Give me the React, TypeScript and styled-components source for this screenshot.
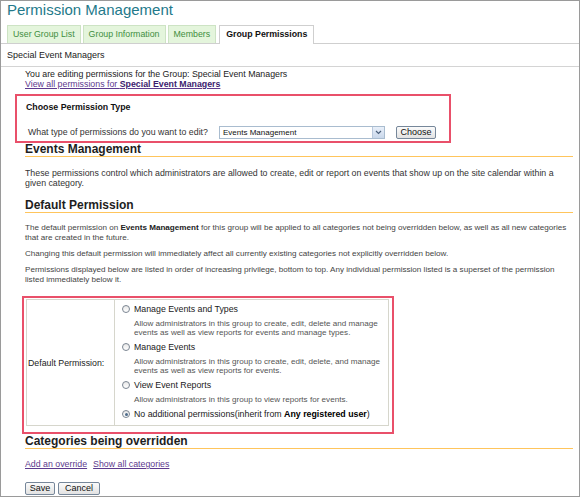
import React, { useState } from 'react'
import styled, { createGlobalStyle, css } from 'styled-components'

const GlobalStyle = createGlobalStyle`
  * { box-sizing: border-box; }
  body {
    margin: 0;
    font-family: "Liberation Sans", Arial, sans-serif;
    background: #ffffff;
    color: #222222;
  }
`;

const tabs = ['User Group List', 'Group Information', 'Members', 'Group Permissions']

const options = [
  {
    id: 'types',
    label: 'Manage Events and Types',
    desc: 'Allow administrators in this group to create, edit, delete and manage events as well as view reports for events and manage types.',
  },
  {
    id: 'events',
    label: 'Manage Events',
    desc: 'Allow administrators in this group to create, edit, delete, and manage events as well as view reports for events.',
  },
  {
    id: 'reports',
    label: 'View Event Reports',
    desc: 'Allow administrators in this group to view reports for events.',
  },
]

export default function App() {
  const [active, setActive] = useState<number>(3)
  const [perm, setPerm] = useState<string>('none')

  return (
    <>
      <GlobalStyle />
      <Frame>
        <Title>Permission Management</Title>
        <TabBar>
          {tabs.map((t, i) => (
            <Tab key={t} active={i === active} onClick={() => setActive(i)}>{t}</Tab>
          ))}
        </TabBar>
        <SubHeader>Special Event Managers</SubHeader>

        <Content>
          <Intro>
            You are editing permissions for the Group: Special Event Managers<br />
            <Link href="#">View all permissions for <strong>Special Event Managers</strong></Link>
          </Intro>

          <ChooseBox>
            <BoxTitle>Choose Permission Type</BoxTitle>
            <ChooseRow>
              <span>What type of permissions do you want to edit?</span>
              <Select>
                <span>Events Management</span>
                <SelectArrow>
                  <svg width="7" height="5" viewBox="0 0 7 5">
                    <path d="M1 1 L3.5 3.5 L6 1" fill="none" stroke="#4a5f7a" strokeWidth="1.2" />
                  </svg>
                </SelectArrow>
              </Select>
              <Button>Choose</Button>
            </ChooseRow>
          </ChooseBox>

          <Heading>Events Management</Heading>
          <Para>
            These permissions control which administrators are allowed to create, edit or report on events that show up on the site calendar within a given category.
          </Para>

          <Heading gap={11}>Default Permission</Heading>
          <SmallPara gap={10}>
            The default permission on <b>Events Management</b> for this group will be applied to all categories not being overridden below, as well as all new categories that are created in the future.
          </SmallPara>
          <SmallPara>
            Changing this default permission will immediately affect all currently existing categories not explicitly overridden below.
          </SmallPara>
          <SmallPara>
            Permissions displayed below are listed in order of increasing privilege, bottom to top. Any individual permission listed is a superset of the permission listed immediately below it.
          </SmallPara>

          <PermBox>
            <PermTable>
              <PermLabel>Default Permission:</PermLabel>
              <PermOptions>
                {options.map(o => (
                  <Option key={o.id}>
                    <OptionLabel onClick={() => setPerm(o.id)}>
                      <Radio checked={perm === o.id} />
                      {o.label}
                    </OptionLabel>
                    <OptionDesc>{o.desc}</OptionDesc>
                  </Option>
                ))}
                <Option>
                  <OptionLabel onClick={() => setPerm('none')}>
                    <Radio checked={perm === 'none'} />
                    <span>No additional permissions(inherit from <b>Any registered user</b>)</span>
                  </OptionLabel>
                </Option>
              </PermOptions>
            </PermTable>
          </PermBox>

          <Heading gap={1}>Categories being overridden</Heading>
          <Links>
            <Link href="#">Add an override</Link>
            <Link href="#">Show all categories</Link>
          </Links>
          <Actions>
            <Button width={30}>Save</Button>
            <Button width={42}>Cancel</Button>
          </Actions>
        </Content>
      </Frame>
    </>
  )
}

const Frame = styled.div`
  width: 580px;
  height: 497px;
  border: 1px solid #9a9a9a;
  overflow: hidden;
`;

const Title = styled.h1`
  margin: 0;
  padding-left: 6px;
  font-size: 15px;
  line-height: 18px;
  font-weight: normal;
  color: #23798a;
`;

const TabBar = styled.div`
  display: flex;
  align-items: flex-end;
  gap: 2px;
  height: 19px;
  margin-top: 6px;
  padding-left: 6px;
  border-bottom: 1px solid #cfcfcf;
`;

const Tab = styled.div<{ active: boolean }>`
  height: 18px;
  padding: 0 5px;
  font-size: 8.8px;
  line-height: 17px;
  color: #3f8e3f;
  background: #e4f5dc;
  border: 1px solid #cde3c4;
  border-bottom: none;
  cursor: pointer;
  ${p => p.active && css`
    height: 19px;
    margin-bottom: -1px;
    margin-left: 1px;
    padding: 0 6px;
    background: #ffffff;
    border-color: #cfcfcf;
    color: #111111;
    font-weight: bold;
  `}
`;

const SubHeader = styled.div`
  height: 23px;
  padding-left: 6px;
  font-size: 9px;
  line-height: 22px;
  color: #222;
  border-bottom: 1px solid #d4d4d4;
`;

const Content = styled.div`
  padding: 0 6px 0 24px;
`;

const Intro = styled.p`
  margin: 2px 0 0;
  font-size: 8.8px;
  line-height: 10px;
`;

const Link = styled.a`
  color: #5d3a8e;
  text-decoration: underline;
  strong { color: #3c1d6e; }
`;

const ChooseBox = styled.div`
  width: 436px;
  height: 49px;
  margin: 5px 0 0 -10px;
  padding: 6px 0 0 9px;
  border: 2px solid #e9506a;
`;

const BoxTitle = styled.div`
  font-size: 8.8px;
  line-height: 10px;
  font-weight: bold;
  color: #111;
`;

const ChooseRow = styled.div`
  display: flex;
  align-items: center;
  height: 14px;
  margin-top: 13px;
  padding-left: 2px;
  font-size: 8.8px;
  color: #333;
  & > span { width: 191px; }
`;

const Select = styled.div`
  display: flex;
  align-items: center;
  justify-content: space-between;
  width: 166px;
  height: 13px;
  padding-left: 3px;
  font-size: 8px;
  color: #111;
  background: #fff;
  border: 1px solid #a9bccf;
`;

const SelectArrow = styled.span`
  display: flex;
  align-items: center;
  justify-content: center;
  width: 12px;
  height: 11px;
  background: linear-gradient(#e9f0fa, #c9d7ea);
  border-left: 1px solid #b8c8dc;
`;

const Button = styled.button<{ width?: number }>`
  width: ${p => p.width ?? 40}px;
  height: 13px;
  margin-left: 11px;
  padding: 0;
  font-family: inherit;
  font-size: 9px;
  line-height: 11px;
  color: #111;
  background: linear-gradient(#fbfbfb, #e2e2e2);
  border: 1px solid #76879a;
  border-radius: 2px;
`;

const Heading = styled.h2<{ gap?: number }>`
  margin: ${p => p.gap ?? 0}px 0 0;
  font-size: 12px;
  line-height: 13px;
  font-weight: bold;
  color: #1e1e1e;
  border-bottom: 1px solid #ffc55c;
`;

const Para = styled.p`
  margin: 11px 0 0;
  font-size: 8.8px;
  line-height: 10px;
  color: #333;
`;

const SmallPara = styled.p<{ gap?: number }>`
  margin: ${p => p.gap ?? 6}px 0 0;
  font-size: 8.1px;
  line-height: 10px;
  color: #444;
  b { color: #222; }
`;

const PermBox = styled.div`
  width: 372px;
  height: 138px;
  margin: 11px 0 0 -3px;
  padding: 1px 3px 0 2px;
  border: 2px solid #e9506a;
`;

const PermTable = styled.div`
  display: grid;
  grid-template-columns: 88px 1fr;
  height: 127px;
  border: 1px solid #d6d6cc;
`;

const PermLabel = styled.div`
  display: flex;
  align-items: center;
  padding-left: 1px;
  font-size: 8.8px;
  color: #222;
  border-right: 1px solid #d6d6cc;
`;

const PermOptions = styled.div`
  padding: 3px 6px 0 7px;
`;

const Option = styled.div`
  margin-bottom: 4px;
`;

const OptionLabel = styled.div`
  display: flex;
  align-items: center;
  gap: 4px;
  font-size: 8.8px;
  line-height: 12px;
  color: #1a1a1a;
  cursor: pointer;
  b { color: #000; }
`;

const Radio = styled.span<{ checked: boolean }>`
  position: relative;
  width: 8px;
  height: 8px;
  border-radius: 50%;
  border: 1px solid #7b8592;
  background: linear-gradient(#e8e8e8, #ffffff);
  flex-shrink: 0;
  ${p => p.checked && css`
    &::after {
      content: "";
      position: absolute;
      left: 1.5px;
      top: 1.5px;
      width: 3px;
      height: 3px;
      border-radius: 50%;
      background: #4d6b8a;
    }
  `}
`;

const OptionDesc = styled.div`
  margin-top: 4px;
  padding-left: 12px;
  font-size: 8.1px;
  line-height: 9px;
  color: #555;
`;

const Links = styled.div`
  display: flex;
  gap: 6px;
  margin-top: 10px;
  font-size: 8.8px;
  line-height: 10px;
`;

const Actions = styled.div`
  display: flex;
  gap: 3px;
  margin-top: 13px;
  & > button { margin-left: 0; }
`;
